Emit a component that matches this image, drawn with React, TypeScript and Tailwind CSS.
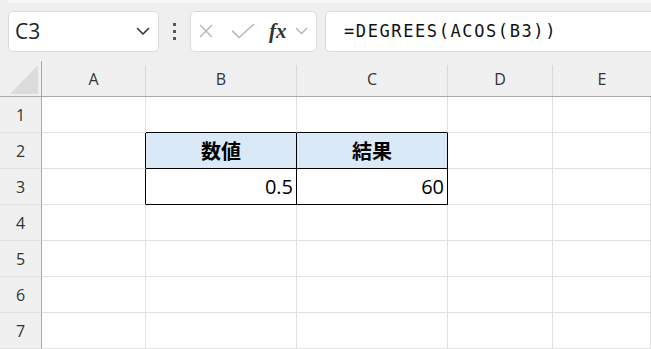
import React from "react";

const cols = ["A", "B", "C", "D", "E"];
const colW = ["w-[104px]", "w-[151px]", "w-[151px]", "w-[105px]", "flex-1"];

type Cell = { text?: string; bold?: boolean; align?: "center" | "right"; fill?: boolean };

const data: Record<string, Cell> = {
  "2-1": { text: "数値", bold: true, align: "center", fill: true },
  "2-2": { text: "結果", bold: true, align: "center", fill: true },
  "3-1": { text: "0.5", align: "right" },
  "3-2": { text: "60", align: "right" },
};

function inTable(r: number, c: number) {
  return r >= 2 && r <= 3 && c >= 1 && c <= 2;
}

export default function App() {
  return (
    <div
      className="w-[651px] h-[349px] overflow-hidden bg-[#efefef] flex flex-col"
      style={{ fontFamily: '"Open Sans", "Noto Sans CJK JP", sans-serif' }}
    >
      {/* top ribbon edge */}
      <div className="h-[3px] ml-[8px] bg-[#f8f8f8] rounded-bl-[4px]" />
      {/* formula bar */}
      <div className="h-[59px] flex items-start pt-[8px] pl-[8px] gap-0">
        <div className="w-[151px] h-[41px] bg-white border border-[#dcdcdc] rounded-[5px] flex items-center justify-between pl-[6px] pr-[8px]">
          <span className="text-[21px] text-[#222] leading-none pt-[1px]" style={{ fontFamily: '"Open Sans", sans-serif' }}>C3</span>
          <svg width="14" height="9" viewBox="0 0 14 9" fill="none">
            <path d="M1.5 1.5 L7 7 L12.5 1.5" stroke="#333" strokeWidth="1.6" strokeLinecap="round" strokeLinejoin="round" />
          </svg>
        </div>
        <div className="w-[31px] h-[41px] flex flex-col items-center justify-center gap-[4px]">
          <div className="w-[3px] h-[3px] bg-[#555]" />
          <div className="w-[3px] h-[3px] bg-[#555]" />
          <div className="w-[3px] h-[3px] bg-[#555]" />
        </div>
        <div className="w-[127px] h-[41px] bg-white border border-[#dcdcdc] rounded-[5px] flex items-center pl-[8px]">
          <svg width="14" height="14" viewBox="0 0 14 14" fill="none">
            <path d="M1 1 L13 13 M13 1 L1 13" stroke="#b4b4b4" strokeWidth="1.4" />
          </svg>
          <svg className="ml-[18px]" width="24" height="16" viewBox="0 0 24 16" fill="none">
            <path d="M1 7.5 L8 14.5 L23 1" stroke="#b4b4b4" strokeWidth="1.4" />
          </svg>
          <span
            className="ml-[14px] text-[21px] italic font-bold text-[#333] leading-none"
            style={{ fontFamily: '"Liberation Serif", "DejaVu Serif", serif' }}
          >
            fx
          </span>
          <svg className="ml-[8px]" width="13" height="8" viewBox="0 0 13 8" fill="none">
            <path d="M1 1 L6.5 6.5 L12 1" stroke="#b0b0b0" strokeWidth="1.3" />
          </svg>
        </div>
        <div className="ml-[8px] flex-1 h-[41px] bg-white border border-[#dcdcdc] border-r-0 rounded-l-[5px] flex items-center pl-[18px]">
          <span
            className="text-[17px] text-[#111] tracking-[1.6px] leading-none"
            style={{ fontFamily: '"DejaVu Sans Mono", monospace' }}
          >
            =DEGREES(ACOS(B3))
          </span>
        </div>
      </div>

      {/* grid */}
      <div className="flex-1 flex flex-col bg-white">
        {/* header row */}
        <div className="h-[36px] shrink-0 flex bg-[#f0f0f0] border-b border-[#a9a9a9]">
          <div className="w-[42px] h-full border-r border-[#a9a9a9] flex items-end justify-end pr-[3px] pb-[2px]">
            <svg width="28" height="29" viewBox="0 0 28 29">
              <path d="M28 0 L28 29 L0 29 Z" fill="#dcdcdc" />
            </svg>
          </div>
          {cols.map((c, i) => (
            <div key={c} className={`${colW[i]} h-full flex flex-col`}>
              <div className="h-[4px]" />
              <div
                className={`flex-1 flex items-center justify-center text-[16px] text-[#333] pb-[3px] ${i < 4 ? "border-r border-[#d8d8d8]" : ""}`}
              >
                {c}
              </div>
            </div>
          ))}
        </div>
        {[1, 2, 3, 4, 5, 6, 7].map((r) => (
          <div key={r} className="h-[36px] flex shrink-0">
            <div className="w-[42px] h-full bg-[#f0f0f0] border-r border-[#a9a9a9] border-b border-b-[#e1e1e1] flex items-center justify-center text-[16px] text-[#333]">
              {r}
            </div>
            {cols.map((c, ci) => {
              const cell = data[`${r}-${ci}`];
              const rightBlack = inTable(r, ci) || inTable(r, ci + 1);
              const bottomBlack = inTable(r, ci) || inTable(r + 1, ci);
              return (
                <div
                  key={c}
                  className={`${colW[ci]} h-full flex items-center border-r border-b ${
                    rightBlack ? "border-r-black" : "border-r-[#e1e1e1]"
                  } ${bottomBlack ? "border-b-black" : "border-b-[#e1e1e1]"} ${
                    cell?.fill ? "bg-[#dae9f8]" : ""
                  } ${cell?.align === "center" ? "justify-center" : "justify-end pr-[3px]"}`}
                >
                  {cell?.text && (
                    <span
                      className={`${cell.bold ? "font-bold text-[20px]" : "text-[20px]"} text-black leading-none`}
                      style={{
                        fontFamily: cell.bold
                          ? '"Noto Sans CJK JP", sans-serif'
                          : '"Open Sans", sans-serif',
                      }}
                    >
                      {cell.text}
                    </span>
                  )}
                </div>
              );
            })}
          </div>
        ))}
      </div>
    </div>
  );
}
